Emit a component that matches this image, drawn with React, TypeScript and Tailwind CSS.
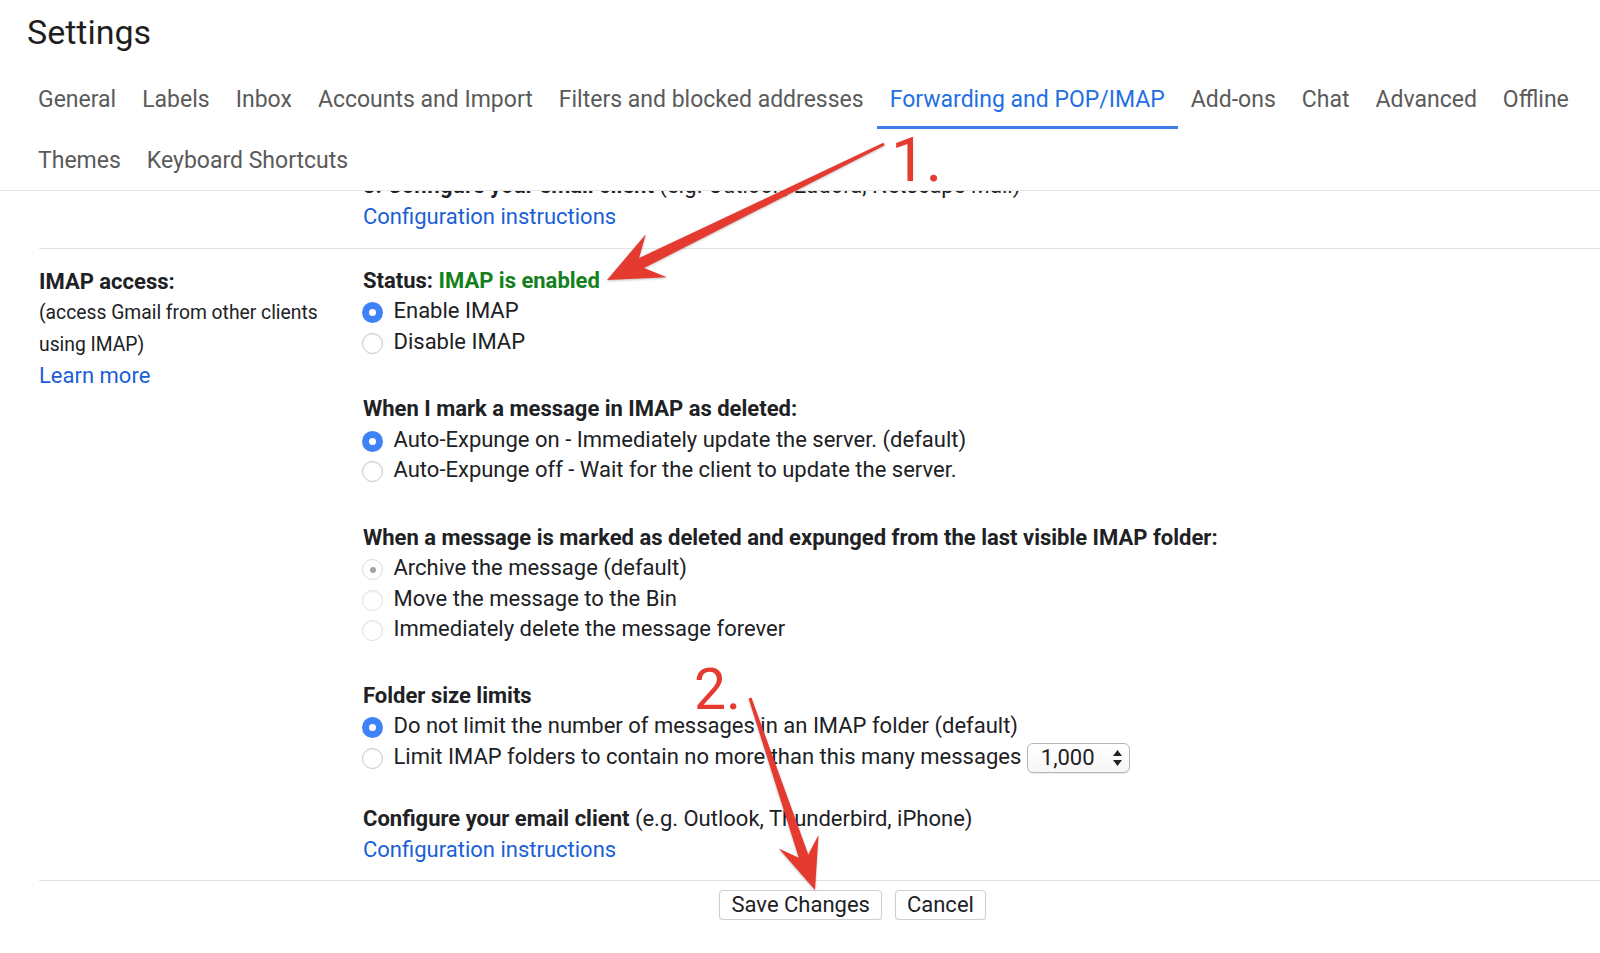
import React from 'react'

const FONT = { fontFamily: 'Roboto, "Noto Sans", Arial, sans-serif' }

const TABS_ROW1 = [
  'General',
  'Labels',
  'Inbox',
  'Accounts and Import',
  'Filters and blocked addresses',
  'Forwarding and POP/IMAP',
  'Add-ons',
  'Chat',
  'Advanced',
  'Offline',
]
const TABS_ROW2 = ['Themes', 'Keyboard Shortcuts']
const ACTIVE = 'Forwarding and POP/IMAP'

type RadioState = 'on' | 'off' | 'dim-on' | 'dim-off'

function Radio({ state }: { state: RadioState }) {
  if (state === 'on') {
    return (
      <span className="-ml-[1px] mt-[3px] flex h-[21px] w-[21px] shrink-0 items-center justify-center rounded-full bg-[#3f82f5]">
        <span className="h-[7px] w-[7px] rounded-full bg-white" />
      </span>
    )
  }
  if (state === 'dim-on') {
    return (
      <span className="-ml-[1px] mt-[3px] flex h-[21px] w-[21px] shrink-0 items-center justify-center rounded-full border border-[#dcdcdc] bg-white">
        <span className="h-[6px] w-[6px] rounded-full bg-[#a3a3a3]" />
      </span>
    )
  }
  return (
    <span
      className={`-ml-[1px] mt-[3px] h-[21px] w-[21px] shrink-0 rounded-full border bg-white shadow-[inset_0_1px_1px_rgba(0,0,0,0.06)] ${
        state === 'dim-off' ? 'border-[#e0e0e0]' : 'border-[#c4c4c4]'
      }`}
    />
  )
}

function Option({ state, children }: { state: RadioState; children: React.ReactNode }) {
  return (
    <div className="flex items-center gap-[10.5px]">
      <Radio state={state} />
      <span>{children}</span>
    </div>
  )
}

function Heading({ children }: { children: React.ReactNode }) {
  return <div className="font-bold">{children}</div>
}

function arrowPoints(
  x1: number,
  y1: number,
  x2: number,
  y2: number,
  tail: number,
  shaft: number,
  head: number,
  half: number,
) {
  const dx = x2 - x1
  const dy = y2 - y1
  const len = Math.hypot(dx, dy)
  const ux = dx / len
  const uy = dy / len
  const nx = -uy
  const ny = ux
  const bx = x2 - ux * head
  const by = y2 - uy * head
  const kx = x2 - ux * head * 0.7
  const ky = y2 - uy * head * 0.7
  const pts = [
    [x1 + (nx * tail) / 2, y1 + (ny * tail) / 2],
    [kx + (nx * shaft) / 2, ky + (ny * shaft) / 2],
    [bx + nx * half, by + ny * half],
    [x2, y2],
    [bx - nx * half, by - ny * half],
    [kx - (nx * shaft) / 2, ky - (ny * shaft) / 2],
    [x1 - (nx * tail) / 2, y1 - (ny * tail) / 2],
  ]
  return pts.map((p) => `${p[0].toFixed(1)},${p[1].toFixed(1)}`).join(' ')
}

export default function App() {
  return (
    <div className="relative h-[953px] w-[1600px] overflow-hidden bg-white text-[#202124]" style={FONT}>
      {/* Title bar */}
      <header className="relative z-10 flex h-[68px] items-center pb-[4px] pl-[27px] shadow-[0_2px_3px_rgba(0,0,0,0.08)]">
        <h1 className="text-[34px] font-normal leading-none text-[#1f1f1f]">Settings</h1>
      </header>

      {/* Tabs */}
      <nav className="relative z-10 border-b border-[#e6e6e6] bg-white pl-[25px] text-[23px] text-[#5a5a5a]">
        {[TABS_ROW1, TABS_ROW2].map((row, i) => (
          <div key={i} className="flex">
            {row.map((t) => (
              <div
                key={t}
                className={`flex h-[61px] items-center border-b-[3px] px-[13px] pt-[7px] ${
                  t === ACTIVE ? 'border-[#3b7de9] text-[#1f6fe5]' : 'border-transparent'
                }`}
              >
                {t}
              </div>
            ))}
          </div>
        ))}
      </nav>

      {/* Scrolled content */}
      <main className="overflow-hidden text-[22px] leading-[30.5px]">
        <div className="-mt-[20px] pl-[39px]">
          <div className="pb-[16px] pl-[324px]">
            <div>
              <span className="font-bold">3. Configure your email client</span> (e.g. Outlook, Eudora, Netscape Mail)
            </div>
            <div className="text-[#1a5fd7]">Configuration instructions</div>
          </div>

          <section className="flex border-t border-[#e3e3e3] pb-[14.5px] pt-[16.5px]">
            <div className="w-[324px] shrink-0 leading-[31.6px]">
              <div className="font-bold">IMAP access:</div>
              <div className="text-[19.3px]">(access Gmail from other clients</div>
              <div className="text-[19.3px]">using IMAP)</div>
              <div className="text-[#1a5fd7]">Learn more</div>
            </div>

            <div className="flex flex-col">
              <div>
                <div className="font-bold">
                  Status: <span className="text-[#14801c]">IMAP is enabled</span>
                </div>
                <Option state="on">Enable IMAP</Option>
                <Option state="off">Disable IMAP</Option>
              </div>

              <div className="mt-[37px]">
                <Heading>When I mark a message in IMAP as deleted:</Heading>
                <Option state="on">Auto-Expunge on - Immediately update the server. (default)</Option>
                <Option state="off">Auto-Expunge off - Wait for the client to update the server.</Option>
              </div>

              <div className="mt-[37px]">
                <Heading>When a message is marked as deleted and expunged from the last visible IMAP folder:</Heading>
                <Option state="dim-on">Archive the message (default)</Option>
                <Option state="dim-off">Move the message to the Bin</Option>
                <Option state="dim-off">Immediately delete the message forever</Option>
              </div>

              <div className="mt-[36px]">
                <Heading>Folder size limits</Heading>
                <Option state="on">Do not limit the number of messages in an IMAP folder (default)</Option>
                <div className="flex h-[30.5px] items-center gap-[10.5px]">
                  <Radio state="off" />
                  <span>Limit IMAP folders to contain no more than this many messages</span>
                  <div className="-ml-[5px] mt-[2px] flex h-[30px] w-[103px] items-center justify-between rounded-[6px] border border-[#b5b5b5] bg-gradient-to-b from-white to-[#f6f6f6] pl-[13px] pr-[6px] shadow-[0_1px_1px_rgba(0,0,0,0.08)]">
                    <span>1,000</span>
                    <svg width="11" height="20" viewBox="0 0 11 20">
                      <path d="M5.5 2 L10 8 H1 Z" fill="#222" />
                      <path d="M5.5 18 L10 12 H1 Z" fill="#222" />
                    </svg>
                  </div>
                </div>
              </div>

              <div className="mt-[32px]">
                <div>
                  <span className="font-bold">Configure your email client</span> (e.g. Outlook, Thunderbird, iPhone)
                </div>
                <div className="text-[#1a5fd7]">Configuration instructions</div>
              </div>
            </div>
          </section>

          <div className="flex gap-[12.5px] border-t border-[#e3e3e3] pl-[680px] pt-[9px] text-[22px]">
            <button
              type="button"
              className="h-[30px] rounded-[4px] border border-[#cfcfcf] bg-white px-[11.5px] leading-none shadow-[0_1px_1px_rgba(0,0,0,0.1)]"
            >
              Save Changes
            </button>
            <button
              type="button"
              className="h-[30px] rounded-[4px] border border-[#cfcfcf] bg-white px-[11px] leading-none shadow-[0_1px_1px_rgba(0,0,0,0.1)]"
            >
              Cancel
            </button>
          </div>
        </div>
      </main>

      {/* Annotation overlay */}
      <svg
        className="pointer-events-none absolute left-0 top-0 z-20"
        width="1600"
        height="953"
        viewBox="0 0 1600 953"
      >
        <g fill="#e53a2f" style={{ filter: 'drop-shadow(0 1px 1px rgba(0,0,0,0.25))' }}>
          <polygon points={arrowPoints(884, 144, 607, 280, 3, 11, 55, 24)} />
          <polygon points={arrowPoints(750, 698, 815, 890, 3, 10, 51, 21)} />
        </g>
      </svg>
      <div className="pointer-events-none absolute left-[891px] top-[129px] z-20 text-[62px] leading-none text-[#e53a2f]">
        1.
      </div>
      <div className="pointer-events-none absolute left-[694px] top-[661px] z-20 text-[57px] leading-none text-[#e53a2f]">
        2.
      </div>
    </div>
  )
}
